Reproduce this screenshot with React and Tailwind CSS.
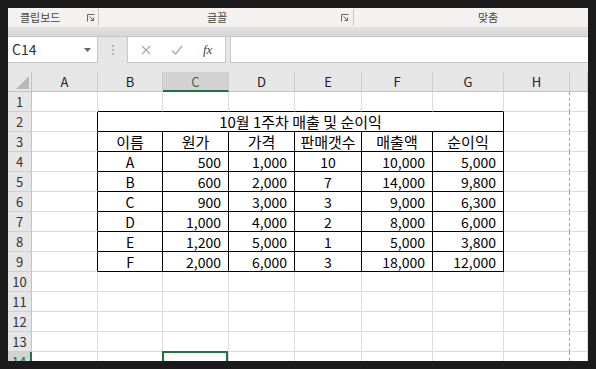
import React from 'react';

const COLS = ['A', 'B', 'C', 'D', 'E', 'F', 'G', 'H', ''];

// rows 3..9 of the sheet, columns B..G
const TABLE = [
    ['이름', '원가', '가격', '판매갯수', '매출액', '순이익'],
    ['A', '500', '1,000', '10', '10,000', '5,000'],
    ['B', '600', '2,000', '7', '14,000', '9,800'],
    ['C', '900', '3,000', '3', '9,000', '6,300'],
    ['D', '1,000', '4,000', '2', '8,000', '6,000'],
    ['E', '1,200', '5,000', '1', '5,000', '3,800'],
    ['F', '2,000', '6,000', '3', '18,000', '12,000'],
];

const Launcher = () => (
    <svg width="8" height="8" viewBox="0 0 8 8" className="text-[#666]">
        <path d="M0.5 7.5V0.5H7.5" fill="none" stroke="currentColor" strokeWidth="1" />
        <path d="M2.5 2.5L6.5 6.5M6.5 3.5V6.5H3.5" fill="none" stroke="currentColor" strokeWidth="1" />
    </svg>
);

const Ribbon = () => (
    <div className="h-[19px] bg-[#f3f2f1] flex items-center text-[11px] text-[#444]">
        <div className="w-[90px] flex items-center">
            <span className="ml-[12px]">클립보드</span>
            <span className="ml-auto mr-[3px] flex"><Launcher /></span>
        </div>
        <div className="w-px h-[17px] bg-[#c8c8c8]" />
        <div className="w-[254px] flex items-center">
            <span className="ml-[108px]">글꼴</span>
            <span className="ml-auto mr-[4px] flex"><Launcher /></span>
        </div>
        <div className="w-px h-[17px] bg-[#c8c8c8]" />
        <div className="flex-1 flex items-center">
            <span className="ml-[124px]">맞춤</span>
        </div>
    </div>
);

const FormulaBar = () => (
    <div>
        <div className="h-[10px] bg-gradient-to-b from-[#e2e2e2] to-[#d6d6d6] border-b border-[#c6c6c6]" />
        <div className="h-[26px] bg-[#e6e6e6] flex">
            <div className="w-[90px] bg-white border-r border-b border-[#c6c6c6] flex items-center pl-[4px] pr-[6px]">
                <span className="text-[14px] text-[#333]">C14</span>
                <svg width="7" height="4" viewBox="0 0 7 4" className="ml-auto">
                    <path d="M0 0H7L3.5 4Z" fill="#666" />
                </svg>
            </div>
            <div className="w-[29px] flex flex-col items-center justify-center gap-[2px]">
                <span className="w-[2px] h-[2px] bg-[#b4b4b4]" />
                <span className="w-[2px] h-[2px] bg-[#b4b4b4]" />
                <span className="w-[2px] h-[2px] bg-[#b4b4b4]" />
            </div>
            <div className="w-[99px] bg-white border border-t-0 border-[#c6c6c6] flex items-center">
                <svg width="10" height="10" viewBox="0 0 10 10" className="ml-[13px]">
                    <path d="M1 1L9 9M9 1L1 9" stroke="#a8a8a8" strokeWidth="1.2" />
                </svg>
                <svg width="12" height="10" viewBox="0 0 12 10" className="ml-[20px]">
                    <path d="M1 5.5L4.5 9L11 1" fill="none" stroke="#a8a8a8" strokeWidth="1.2" />
                </svg>
                <span className="ml-[20px] text-[13px] italic text-[#444] font-['Liberation_Serif',serif]">fx</span>
            </div>
            <div className="w-[4px]" />
            <div className="flex-1 bg-white border-l border-b border-[#c6c6c6]" />
        </div>
        <div className="h-[9px] bg-[#e6e6e6]" />
    </div>
);

const cellAlign = (col, rowIdx) => {
    if (rowIdx === 0) return 'justify-center text-[15px]';
    if (col === 1 || col === 4) return 'justify-center text-[14px]';
    return 'justify-end pr-[7px] text-[14px]';
};

const Sheet = () => {
    const rows = [];

    // column header row
    rows.push(
        <div key="corner" className="h-[20px] bg-[#e6e6e6] border-r border-b border-[#c3c3c3] flex items-end justify-end p-[2px]">
            <svg width="13" height="13" viewBox="0 0 13 13">
                <path d="M13 0V13H0Z" fill="#b9b9b9" />
            </svg>
        </div>
    );
    COLS.forEach((c, i) => {
        const sel = c === 'C';
        rows.push(
            <div
                key={'h' + i}
                className={`h-[20px] flex items-center justify-center text-[13px] border-r border-[#cdcdcd] ${sel ? 'bg-[#d2d2d2] text-[#217346] border-b-2 border-b-[#217346]' : 'bg-[#e6e6e6] text-[#222] border-b border-b-[#c3c3c3]'}`}
            >
                {c}
            </div>
        );
    });

    for (let r = 1; r <= 14; r++) {
        const sel = r === 14;
        rows.push(
            <div
                key={'r' + r}
                className={`h-[20px] flex items-center justify-center text-[13px] border-b border-b-[#cfcfcf] ${sel ? 'bg-[#d2d2d2] text-[#217346] border-r-2 border-r-[#217346]' : 'bg-[#e6e6e6] text-[#333] border-r border-r-[#c3c3c3]'}`}
            >
                {r}
            </div>
        );

        for (let c = 0; c < 9; c++) {
            const inTable = r >= 2 && r <= 9 && c >= 1 && c <= 6;
            const rBlack = (inTable) || (r >= 2 && r <= 9 && c === 0);
            const bBlack = inTable || (r === 1 && c >= 1 && c <= 6);

            if (r === 2 && c === 1) {
                rows.push(
                    <div
                        key={r + '-' + c}
                        className="col-span-6 h-[20px] flex items-center justify-center border-r border-b border-black text-[15px] text-black"
                    >
                        10월 1주차 매출 및 순이익
                    </div>
                );
                continue;
            }
            if (r === 2 && c >= 2 && c <= 6) continue;

            let text = '';
            let align = 'justify-center';
            if (r >= 3 && r <= 9 && inTable) {
                text = TABLE[r - 3][c - 1];
                align = cellAlign(c, r - 3);
            }

            const rightCls = c === 7
                ? 'border-r border-r-[#9c9c9c] [border-right-style:dashed]'
                : `border-r ${rBlack ? 'border-r-black' : 'border-r-[#dcdcdc]'}`;
            const bottomCls = `border-b ${bBlack ? 'border-b-black' : 'border-b-[#dcdcdc]'}`;

            rows.push(
                <div
                    key={r + '-' + c}
                    className={`relative h-[20px] flex items-center bg-white text-black whitespace-nowrap ${rightCls} ${bottomCls} ${align}`}
                >
                    {text}
                    {sel && c === 2 && (
                        <div className="absolute -left-[1px] -top-[1px] right-0 h-[22px] border-2 border-[#217346]" />
                    )}
                </div>
            );
        }
    }

    return (
        <div className="h-[289px] overflow-hidden bg-white">
            <div className="grid grid-cols-[24px_66px_65px_66px_66px_67px_71px_71px_66px_18px] leading-none">
                {rows}
            </div>
        </div>
    );
};

export default function App() {
    return (
        <div className="w-[596px] h-[369px] bg-[#1b1b1b] p-[8px] font-['Noto_Sans_CJK_KR',sans-serif]">
            <div className="w-[580px] h-[353px] overflow-hidden bg-white">
                <Ribbon />
                <FormulaBar />
                <Sheet />
            </div>
        </div>
    );
}
